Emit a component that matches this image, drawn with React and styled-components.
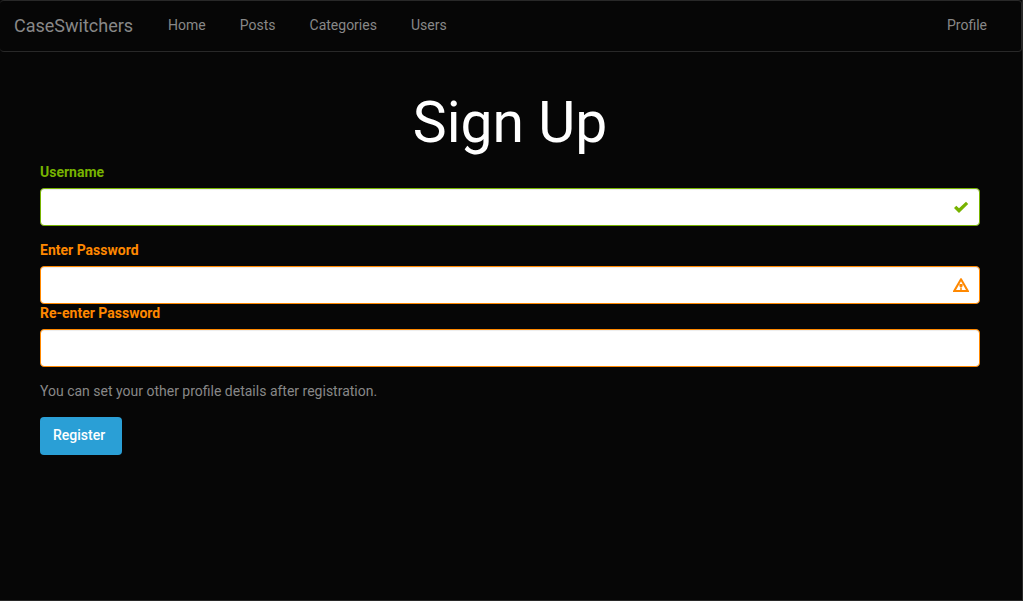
import React from "react";
import styled, { createGlobalStyle } from "styled-components";

const GlobalStyle = createGlobalStyle`
  *, *::before, *::after { box-sizing: border-box; }
  body {
    margin: 0;
    background: #060606;
    color: #888888;
    font-family: Roboto, "Liberation Sans", sans-serif;
    font-size: 14px;
    line-height: 20px;
  }
`;

const tones = { success: "#77b300", warning: "#ff8800" };

const Page = styled.div`
  min-height: 100vh;
  border-right: 1px solid #282828;
  border-bottom: 1px solid #282828;
`;

const Navbar = styled.nav`
  display: flex;
  align-items: center;
  min-height: 52px;
  padding: 0 17px 0 14px;
  border: 1px solid #282828;
  border-left: 0;
  border-radius: 4px;
`;

const Brand = styled.a`
  margin-right: 18px;
  color: #888888;
  font-size: 18px;
  text-decoration: none;
`;

const NavList = styled.ul`
  display: flex;
  flex: ${(p) => (p.$grow ? 1 : "none")};
  margin: 0;
  padding: 0;
  list-style: none;
`;

const NavLink = styled.a`
  display: block;
  padding: 14px 17px 16px;
  color: #888888;
  text-decoration: none;
  &:hover { color: #ffffff; }
`;

const Main = styled.main`
  padding: 39px 42px 40px 40px;
`;

const Title = styled.h1`
  margin: 0 0 8px;
  color: #ffffff;
  font-size: 57px;
  font-weight: 400;
  line-height: 64px;
  text-align: center;
`;

const FormGroup = styled.div`
  margin-bottom: 15px;
  color: ${(p) => tones[p.$tone]};
`;

const Label = styled.label`
  display: block;
  width: fit-content;
  margin-bottom: 7px;
  font-weight: 700;
  line-height: 18px;
`;

const InputWrap = styled.div`
  position: relative;
`;

const Input = styled.input`
  display: block;
  width: 100%;
  height: 38px;
  padding: 8px 42px 8px 12px;
  border: 1px solid currentColor;
  border-radius: 4px;
  background: #ffffff;
  box-shadow: inset 0 1px 1px rgba(0, 0, 0, 0.075);
  color: inherit;
  font: inherit;
`;

const Feedback = styled.svg`
  position: absolute;
  top: 12px;
  right: 11px;
  width: 16px;
  height: 14px;
  pointer-events: none;
`;

const Hint = styled.p`
  margin: 0 0 17px;
  line-height: 18px;
`;

const Button = styled.button`
  display: block;
  height: 38px;
  padding: 0 17px 2px 13px;
  border: 0;
  border-radius: 4px;
  background: #2a9fd6;
  color: #ffffff;
  font: inherit;
  font-weight: 500;
  cursor: pointer;
`;

const links = ["Home", "Posts", "Categories", "Users"];

function CheckIcon() {
  return (
    <Feedback viewBox="0 0 16 14" aria-hidden="true">
      <path d="M1 8 L3.3 5.7 L6 8.2 L13 1.7 L15.2 3.9 L6 13 Z" fill="currentColor" />
    </Feedback>
  );
}

function WarningIcon() {
  return (
    <Feedback viewBox="0 0 16 14" aria-hidden="true">
      <path
        fillRule="evenodd"
        d="M7.4 0.2 H8.6 L16 13 V14 H0 V13 Z M8 3.2 L3 12 H13 Z"
        fill="currentColor"
      />
      <path d="M6.4 6 H9.6 V8 L8.9 9.5 H7.1 L6.4 8 Z M7 10.2 H9 V11.7 H7 Z" fill="currentColor" />
    </Feedback>
  );
}

function Field({ id, label, type, children }) {
  return (
    <>
      <Label htmlFor={id}>{label}</Label>
      <InputWrap>
        <Input id={id} name={id} type={type} />
        {children}
      </InputWrap>
    </>
  );
}

export default function App() {
  return (
    <>
      <GlobalStyle />
      <Page>
        <Navbar>
          <Brand href="#">CaseSwitchers</Brand>
          <NavList $grow>
            {links.map((name) => (
              <li key={name}>
                <NavLink href={`#${name.toLowerCase()}`}>{name}</NavLink>
              </li>
            ))}
          </NavList>
          <NavList>
            <li>
              <NavLink href="#profile">Profile</NavLink>
            </li>
          </NavList>
        </Navbar>
        <Main>
          <Title>Sign Up</Title>
          <form onSubmit={(e) => e.preventDefault()}>
            <FormGroup $tone="success">
              <Field id="username" label="Username" type="text">
                <CheckIcon />
              </Field>
            </FormGroup>
            <FormGroup $tone="warning">
              <Field id="password" label="Enter Password" type="password">
                <WarningIcon />
              </Field>
              <Field id="password-repeat" label="Re-enter Password" type="password" />
            </FormGroup>
            <Hint>You can set your other profile details after registration.</Hint>
            <Button type="submit">Register</Button>
          </form>
        </Main>
      </Page>
    </>
  );
}
